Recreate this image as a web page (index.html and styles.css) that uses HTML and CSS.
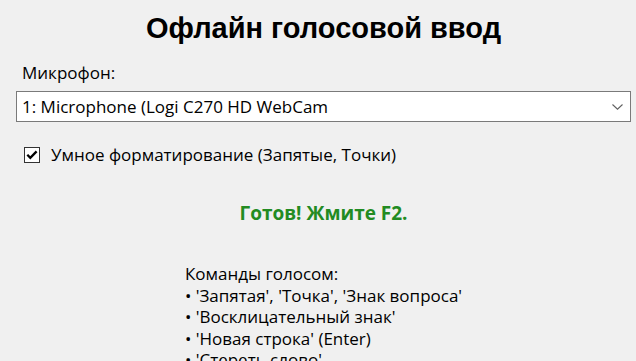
FILE: index.html
```html
<!DOCTYPE html>
<html lang="ru">
<head>
    <meta charset="UTF-8">
    <title>Офлайн голосовой ввод</title>
    <link rel="stylesheet" href="styles.css">
</head>
<body>
    <div class="app">
        <h1 class="title">Офлайн голосовой ввод</h1>

        <div class="field">
            <div class="field-label">Микрофон:</div>
            <div class="combo">
                <span class="combo-value">1: Microphone (Logi C270 HD WebCam</span>
                <svg class="combo-arrow" width="11" height="6" viewBox="0 0 11 6">
                    <path d="M0.5 0.5 L5.5 5.2 L10.5 0.5" fill="none" stroke="#606060" stroke-width="1.1"/>
                </svg>
            </div>
        </div>

        <label class="check">
            <span class="check-box">
                <svg width="12" height="10" viewBox="0 0 12 10">
                    <path d="M1.3 4.8 L4.3 7.8 L10.6 1.4" fill="none" stroke="#000" stroke-width="2.3"/>
                </svg>
            </span>
            <span>Умное форматирование (Запятые, Точки)</span>
        </label>

        <div class="status">Готов! Жмите F2.</div>

        <div class="help">
            <div class="help-text">
                <div>Команды голосом:</div>
                <div>• 'Запятая', 'Точка', 'Знак вопроса'</div>
                <div>• 'Восклицательный знак'</div>
                <div>• 'Новая строка' (Enter)</div>
                <div>• 'Стереть слово'</div>
            </div>
        </div>
    </div>
</body>
</html>
```
FILE: styles.css
```css
/* Окно в стиле Windows */
body {
    margin: 0;
    background: #f0f0f0;
    font-family: "Open Sans", "Noto Sans", sans-serif;
    font-size: 17px;
    color: #000;
    overflow: hidden;
}
.app {
    padding: 0 5px 0 16px;
    display: flex;
    flex-direction: column;
}
.title {
    margin: 11px 0 0;
    font-family: "Liberation Sans", Arial, sans-serif;
    font-size: 29px;
    font-weight: bold;
    text-align: center;
    line-height: 34px;
}
.field {
    margin-top: 17px;
}
.field-label {
    padding-left: 6px;
    line-height: 22px;
}
.combo {
    margin-top: 7px;
    height: 29px;
    background: #fff;
    border: 1px solid #7a7a7a;
    display: flex;
    align-items: center;
    justify-content: space-between;
    padding: 0 7px 0 5px;
}
.combo-value {
    line-height: 22px;
}
.check {
    margin-top: 22px;
    margin-left: 8px;
    display: flex;
    align-items: center;
    gap: 11px;
    line-height: 22px;
}
.check-box {
    width: 14px;
    height: 14px;
    background: #fff;
    border: 1px solid #333;
    display: flex;
    justify-content: center;
    align-items: center;
}
.status {
    margin-top: 35px;
    text-align: center;
    color: #228b22;
    font-weight: bold;
    font-size: 19px;
    line-height: 24px;
}
.help {
    margin-top: 38px;
    display: flex;
    justify-content: center;
}
.help-text {
    line-height: 21.5px;
}
```
